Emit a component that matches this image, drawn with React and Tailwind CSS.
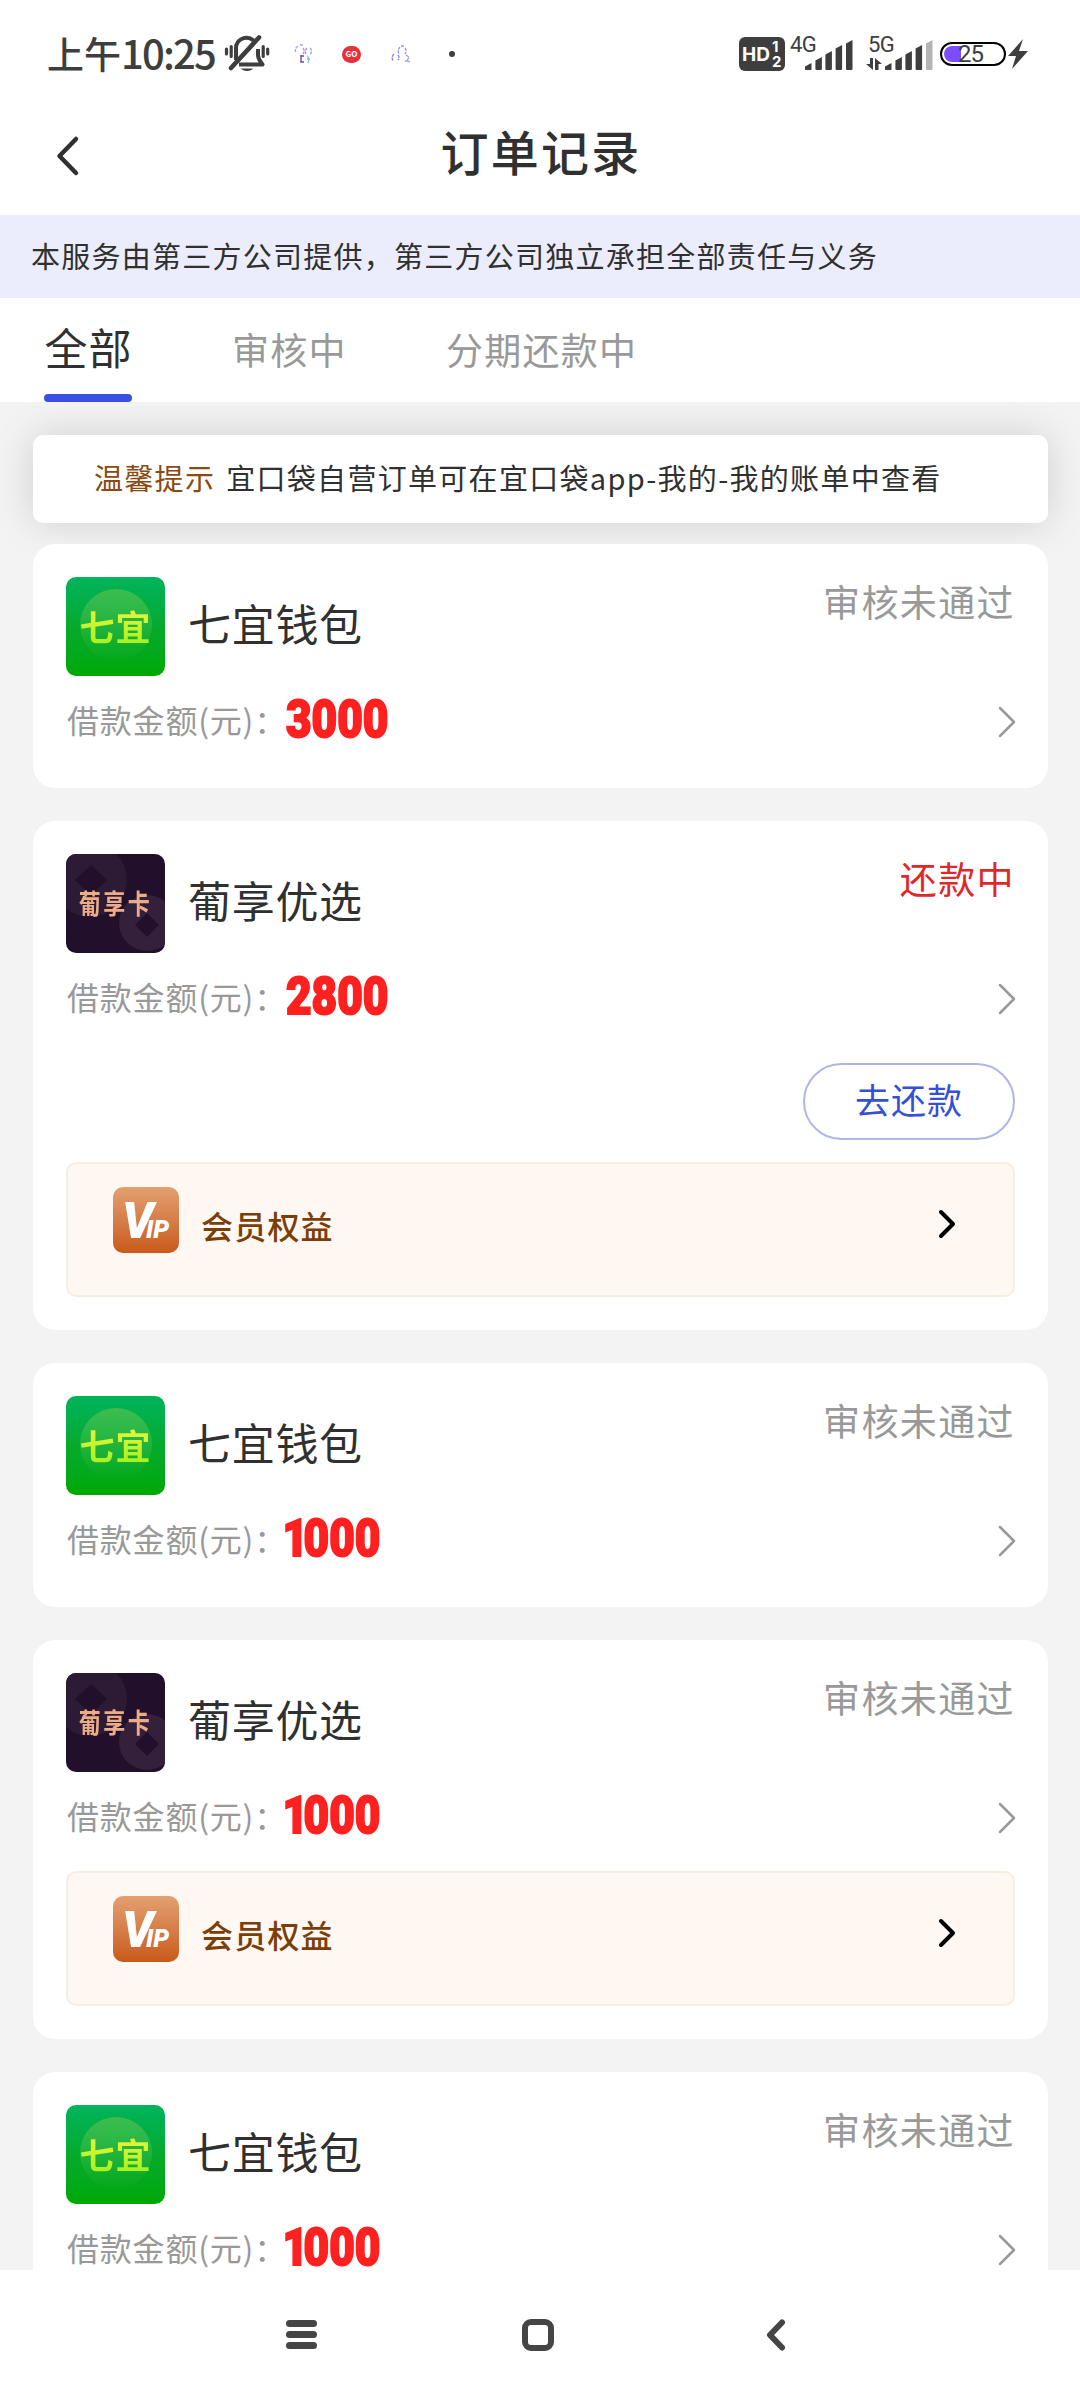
import React from 'react';
import clsx from 'clsx';

const BellOffIcon = () => (
  <svg className="w-[46px] h-[40px] shrink-0" viewBox="0 0 46 40" fill="none" stroke="#3e3e3e" strokeWidth="4">
    <path d="M12 26V14.500a10.500 10.500 0 0 1 17.500-8M34 15v6c0 4 2 6 4.500 9.500H15" strokeLinejoin="round" />
    <path d="M7 34L35 3.500" strokeLinecap="round" strokeWidth="4.600" />
    <path d="M2.500 15v5M7.200 12.500v10M39.200 12.500v10M43.700 15v5" strokeWidth="3.200" strokeLinecap="round" />
    <path d="M17 34.500h12a6.500 4 0 0 1-12 0z" fill="#3e3e3e" stroke="none" />
  </svg>
);

const BracketsIcon = () => (
  <svg className="w-[20px] h-[20px] shrink-0" viewBox="0 0 20 20" fill="none" strokeWidth="1.400">
    <path d="M5 2Q1 5 3 9M7 1h3M10 4q2 2 0 6M14 4q-3 3-1 6M17 4q3 3 0 7" stroke="#a79fdd" strokeDasharray="3 1" />
    <path d="M8 11v7h3M8 12h3" stroke="#6a45c8" />
    <path d="M14 12q3 2 1 7M14 15h3" stroke="#8cc4e8" />
  </svg>
);

const PeopleIcon = () => (
  <svg className="w-[20px] h-[20px] shrink-0" viewBox="0 0 20 20" fill="none" strokeWidth="1.400">
    <path d="M9 3q-3 3-1 7M10 2h3M14 4q2 3 0 6" stroke="#8f9ae0" strokeDasharray="3 1" />
    <path d="M3 10q-3 3-1 7M7 11q2 3 0 5" stroke="#8a7fd0" strokeDasharray="3 1" />
    <path d="M15 11q4 2 2 4t2 3M14 17h3" stroke="#a5abe6" />
  </svg>
);

const SignalIcon = ({ level }) => {
  const bars = [
    { x: 0, h: 7 },
    { x: 10.4, h: 13 },
    { x: 20.4, h: 19 },
    { x: 30.6, h: 25 },
    { x: 41, h: 30 }
  ];
  return (
    <svg className="w-[48px] h-[30px] shrink-0" viewBox="0 0 48 30">
      {bars.map(({ x, h }, i) => (
        <path
          key={x}
          d={`M${x} ${33.5 - h}L${x + 6.5} ${30 - h}V29a1 1 0 0 1-1 1H${x + 1}a1 1 0 0 1-1-1z`}
          fill={i < level ? '#3e3e3e' : '#b4b4b4'}
        />
      ))}
    </svg>
  );
};

const StatusBar = () => (
  <div className="h-[108px] flex items-center pl-[47px] pr-[52px] text-[#3e3e3e]">
    <span className="w-[177px] pb-[5px] whitespace-nowrap text-[37px] leading-none font-medium">
      上午<span className="text-[40px] tracking-[-1.800px]">10:25</span>
    </span>
    <BellOffIcon />
    <div className="flex items-center ml-[23px]">
      <BracketsIcon />
      <span className="ml-[29px] w-[19px] h-[17px] rounded-full bg-[#e6313c] text-white text-[8px] leading-[16px] font-bold text-center">GO</span>
      <span className="ml-[30px] flex"><PeopleIcon /></span>
      <span className="ml-[38px] w-[6px] h-[6px] rounded-full bg-[#3e3e3e]" />
    </div>

    <div className="ml-auto flex items-center">
      <div className="w-[46px] h-[34px] rounded-[6px] bg-[#3e3e3e] text-white flex items-center pl-[3px] font-['Inter'] font-bold">
        <span className="text-[19px] leading-none w-[30px]">HD</span>
        <span className="flex flex-col text-[15px] leading-[15px]">
          <span>1</span>
          <span>2</span>
        </span>
      </div>
      <div className="relative ml-[20px] pt-[2px]">
        <SignalIcon level={5} />
        <span className="absolute left-[-15px] top-[-4px] font-['Roboto'] text-[22px] leading-none tracking-[-0.500px]">4G</span>
      </div>
      <div className="relative ml-[32px] pt-[2px]">
        <SignalIcon level={4} />
        <span className="absolute left-[-17px] top-[-4px] font-['Roboto'] text-[22px] leading-none tracking-[-0.500px]">5G</span>
        <svg className="absolute left-[-19px] top-[20px] w-[16px] h-[12px]" viewBox="0 0 16 12" fill="#3e3e3e">
          <path d="M4 0h3v12L0 6h4zM9 0l7 6h-3.500v6H9z" />
        </svg>
      </div>
      <div className="relative ml-[7px] w-[66px] h-[24px] rounded-full border-2 border-black">
        <div className="absolute left-[2px] top-[2px] w-[17px] h-[16px] rounded-l-full bg-[#7c4dff]" />
        <span className="absolute left-[16px] top-[-2px] font-['Roboto'] text-[24px] leading-none tracking-[-1px]">25</span>
      </div>
      <svg className="ml-[2px] w-[20px] h-[30px]" viewBox="0 0 20 30" fill="#3e3e3e">
        <path d="M15 0L0 17h8L4 30 20 12h-9z" />
      </svg>
    </div>
  </div>
);

const Chevron = ({ className, d, width }) => (
  <svg className={className} fill="none" stroke="currentColor" strokeWidth={width} strokeLinecap="round" strokeLinejoin="round">
    <path d={d} />
  </svg>
);

const Header = () => (
  <div className="h-[107px] flex items-center px-[55px] pb-[13px]">
    <Chevron className="w-[26px] h-[42px] text-[#303030] mt-[2px]" d="M21 4L4.500 21 21 38" width={4.5} />
    <h1 className="flex-1 text-center pr-[24px] pb-[11px] text-[48px] leading-none font-medium tracking-[2.200px] text-[#303030]">订单记录</h1>
  </div>
);

const tabs = ['审核中', '分期还款中'];

const Tabs = () => (
  <div className="relative z-10 h-[104px] bg-white flex items-center pl-[44px] text-[#999]">
    <div className="relative h-full w-[88px] flex items-center justify-center pb-[7px] text-[43px] tracking-[1px] text-[#303030] whitespace-nowrap">
      <span className="ml-[1px]">全部</span>
      <div className="absolute left-0 bottom-0 w-full h-[8px] rounded-[4px] bg-[#3a50e0]" />
    </div>
    {tabs.map((tab) => (
      <span key={tab} className="ml-[99px] first-of-type:ml-[100px] text-[37px] tracking-[1.300px]">{tab}</span>
    ))}
  </div>
);

const WalletLogo = () => (
  <div className="relative w-[99px] h-[99px] rounded-[10px] overflow-hidden bg-gradient-to-b from-[#00b45c] via-[#06aa2c] to-[#00a800] flex items-center justify-center">
    <div className="absolute left-[14px] top-[12px] w-[72px] h-[72px] rounded-full bg-gradient-to-b from-[#3dbd4c] to-transparent" />
    <span className="relative mb-[1px] text-[35px] leading-[44px] font-bold tracking-[1px] bg-gradient-to-b from-[#f2f53c] to-[#9cf01c] bg-clip-text text-transparent">七宜</span>
  </div>
);

const CardLogo = () => (
  <div className="relative w-[99px] h-[99px] rounded-[10px] overflow-hidden bg-[#210f2b] flex items-center justify-center">
    <svg className="absolute inset-0 w-full h-full" viewBox="0 0 99 99">
      <circle cx="24" cy="26" r="37" fill="#2d1a35" />
      <path d="M25 11l16 15-16 15L9 26z" fill="#210f2b" />
      <circle cx="81" cy="69" r="28" fill="#35203c" />
      <path d="M81 59l12 12-12 12-12-12z" fill="#210f2b" />
    </svg>
    <span className="relative mb-[5px] scale-y-[1.25] text-[22px] leading-none font-bold tracking-[2.500px] text-[#ecac88]">葡享卡</span>
  </div>
);

const VipIcon = () => (
  <div className="relative w-[66px] h-[66px] rounded-[10px] bg-gradient-to-b from-[#e3a070] to-[#c85a15] text-white font-['Roboto'] font-black italic leading-none">
    <span className="absolute left-[9px] top-[10px] text-[49px]">V</span>
    <span className="absolute left-[33px] top-[30px] text-[25px]">IP</span>
  </div>
);

const VipEntry = () => (
  <div className="h-[135px] rounded-[10px] border-2 border-[#f8ece3] bg-[#fff7f1] flex items-start pl-[45px] pr-[57px] pt-[23px]">
    <VipIcon />
    <span className="ml-[22px] mt-[17px] text-[32px] leading-[42px] tracking-[1.200px] font-medium text-[#7a3f08]">会员权益</span>
    <Chevron className="ml-auto mt-[20px] w-[20px] h-[34px] text-black" d="M5 5L17 17 5 29" width={4} />
  </div>
);

const Amount = ({ value }) => {
  const text = String(value);
  // a leading 1 is set narrower than the other digits
  const narrow = text.startsWith('1');
  return (
    <span className="mt-[-6px] origin-left scale-x-[0.85] font-['Roboto'] font-black text-[52px] leading-none text-[#ff2020] [-webkit-text-stroke:2px_#ff2020]">
      {narrow && <span className="ml-[-4px] tracking-[-5.500px]">1</span>}
      {narrow ? text.slice(1) : text}
    </span>
  );
};

const OrderCard = ({ order }) => {
  const { brand, amount, repaying, vip } = order;
  const isWallet = brand === 'wallet';
  return (
    <div className="rounded-[22px] bg-white p-[33px]">
      <div className="h-[99px] flex">
        {isWallet ? <WalletLogo /> : <CardLogo />}
        <h2 className="ml-[23px] mt-[16px] text-[43px] leading-[58px] tracking-[0.700px] text-[#303030]">
          {isWallet ? '七宜钱包' : '葡享优选'}
        </h2>
        <span className={clsx('ml-auto mt-[-1px] text-[37px] leading-[50px] tracking-[1.400px]', repaying ? 'text-[#e02828]' : 'text-[#999]')}>
          {repaying ? '还款中' : '审核未通过'}
        </span>
      </div>
      <div className="h-[79px] pt-[14px] flex items-center">
        <span className="mt-[-7px] text-[32px] tracking-[0.800px] text-[#999] w-[219px] pl-[1px] mr-[1px] whitespace-nowrap">借款金额(元)：</span>
        <Amount value={amount} />
        <Chevron className="ml-auto mt-[-1px] mr-[-1px] w-[18px] h-[32px] text-[#999]" d="M2 2L16 16 2 30" width={2.5} />
      </div>
      {repaying && (
        <div className="flex justify-end mt-[31px] mb-[2px]">
          <button className="w-[212px] h-[77px] pb-[6px] rounded-full border-2 border-[#adb7e6] text-[35px] leading-none text-[#354fd6] tracking-[1px]">
            去还款
          </button>
        </div>
      )}
      {vip && (
        <div className={repaying ? 'mt-[22px]' : 'mt-[20px]'}>
          <VipEntry />
        </div>
      )}
    </div>
  );
};

const orders = [
  { id: 1, brand: 'wallet', amount: 3000 },
  { id: 2, brand: 'card', amount: 2800, repaying: true, vip: true },
  { id: 3, brand: 'wallet', amount: 1000 },
  { id: 4, brand: 'card', amount: 1000, vip: true },
  { id: 5, brand: 'wallet', amount: 1000 }
];

const NavBar = () => (
  <div className="relative h-[130px] shrink-0 bg-white flex items-start pl-[286px] pt-[49px] text-[#454545]">
    <div className="flex flex-col gap-[4px] pt-[1px]">
      <div className="w-[31px] h-[7px] rounded-full bg-[#454545]" />
      <div className="w-[31px] h-[7px] rounded-full bg-[#454545]" />
      <div className="w-[31px] h-[7px] rounded-full bg-[#454545]" />
    </div>
    <div className="ml-[205px] w-[32px] h-[32px] rounded-[9px] border-[6px] border-[#454545]" />
    <Chevron className="ml-[211px] w-[22px] h-[32px]" d="M17 3.500L5 16 17 28.500" width={6} />
  </div>
);

export default function App() {
  return (
    <div className="w-[1080px] h-[2400px] overflow-hidden flex flex-col bg-white font-['Noto_Sans_CJK_SC',sans-serif]">
      <StatusBar />
      <Header />
      <div className="h-[83px] shrink-0 bg-[#ebedfc] flex items-center pl-[31px] pb-[1px] text-[29px] tracking-[1.250px] text-[#303030] whitespace-nowrap">
        本服务由第三方公司提供，第三方公司独立承担全部责任与义务
      </div>
      <Tabs />
      <div className="flex-1 min-h-0 overflow-hidden bg-[#f3f3f3] pl-[33px] pr-[32px] pt-[33px]">
        <div className="h-[88px] rounded-[10px] bg-white shadow-[0_0_40px_rgba(0,0,0,0.15)] flex items-center pl-[61px] pb-[2px] text-[29px] tracking-[1.300px] text-[#303030] whitespace-nowrap">
          <span className="text-[#8a4a10] mr-[11px]">温馨提示</span>
          宜口袋自营订单可在宜口袋app-我的-我的账单中查看
        </div>
        <div className="relative mt-[21px] flex flex-col gap-[33px]">
          {orders.map((order) => (
            <OrderCard key={order.id} order={order} />
          ))}
        </div>
      </div>
      <NavBar />
    </div>
  );
}
